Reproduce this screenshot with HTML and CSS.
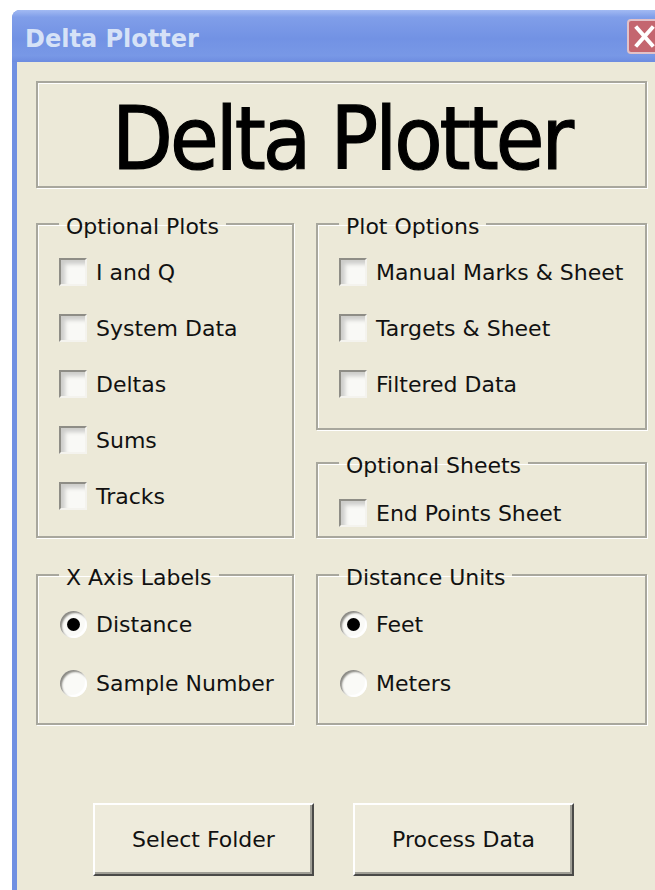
FILE: index.html
```html
<!DOCTYPE html>
<html lang="en">
<head>
<meta charset="utf-8">
<title>Delta Plotter</title>
<link rel="stylesheet" href="styles.css">
</head>
<body>
<div class="window">
  <div class="titlebar">
    <span class="title">Delta Plotter</span>
    <div class="close">
      <svg width="35" height="35" viewBox="0 0 35 35"><path d="M10 9 L25 26 M25 9 L10 26" stroke="#fff" stroke-width="4" stroke-linecap="square" fill="none"/></svg>
    </div>
  </div>
  <div class="client">
    <div class="banner">Delta Plotter</div>

    <div class="groups">
      <fieldset class="group plots">
        <legend><span>Optional Plots</span></legend>
        <div class="opt"><span class="check"></span>I and Q</div>
        <div class="opt"><span class="check"></span>System Data</div>
        <div class="opt"><span class="check"></span>Deltas</div>
        <div class="opt"><span class="check"></span>Sums</div>
        <div class="opt"><span class="check"></span>Tracks</div>
      </fieldset>

      <div class="stack">
        <fieldset class="group options">
          <legend><span>Plot Options</span></legend>
          <div class="opt"><span class="check"></span>Manual Marks &amp; Sheet</div>
          <div class="opt"><span class="check"></span>Targets &amp; Sheet</div>
          <div class="opt"><span class="check"></span>Filtered Data</div>
        </fieldset>
        <fieldset class="group sheets">
          <legend><span>Optional Sheets</span></legend>
          <div class="opt short"><span class="check"></span>End Points Sheet</div>
        </fieldset>
      </div>

      <fieldset class="group radios">
        <legend><span>X Axis Labels</span></legend>
        <div class="opt tall"><span class="radio on"></span>Distance</div>
        <div class="opt tall"><span class="radio"></span>Sample Number</div>
      </fieldset>

      <fieldset class="group radios">
        <legend><span>Distance Units</span></legend>
        <div class="opt tall"><span class="radio on"></span>Feet</div>
        <div class="opt tall"><span class="radio"></span>Meters</div>
      </fieldset>
    </div>

    <div class="buttons">
      <button class="btn">Select Folder</button>
      <button class="btn">Process Data</button>
    </div>
  </div>
</div>
</body>
</html>
```
FILE: styles.css
```css
html, body {
  margin: 0;
  padding: 0;
  overflow: hidden;
  background: #fff;
}

body {
  width: 655px;
  height: 890px;
  font-family: "DejaVu Sans", "Liberation Sans", sans-serif;
  color: #111;
}

/* dialog frame */
.window {
  margin: 10px 0 0 12px;
  width: 660px;
  height: 900px;
  background: #7090e2;
  border-radius: 8px 8px 0 0;
  display: flex;
  flex-direction: column;
}

.titlebar {
  height: 52px;
  flex: none;
  display: flex;
  align-items: center;
  padding: 0 10px 0 13px;
  border-radius: 8px 8px 0 0;
  background: linear-gradient(180deg, #a2baf3 0%, #809ee9 14%, #7292e4 55%, #7898e6 88%, #6d8ce0 100%);
}

.title {
  font-weight: bold;
  font-size: 24px;
  padding-top: 5px;
  color: #d6e2f7;
}

.close {
  margin-left: auto;
  width: 35px;
  height: 35px;
  box-sizing: border-box;
  border: 2px solid #e2c2c8;
  border-radius: 4px;
  background: #c4666f;
  display: flex;
}

.close svg {
  margin: -2px;
}

.client {
  flex: 1;
  margin-left: 5px;
  background: #ece9d8;
  padding: 19px 0 0 19px;
}

/* etched frame around the heading */
.banner {
  width: 611px;
  height: 107px;
  box-sizing: border-box;
  border: 2px solid #a8a79d;
  box-shadow: inset 1px 1px 0 #fff, 1px 1px 0 #fff;
  display: flex;
  align-items: center;
  justify-content: center;
  padding-top: 8px;
  font-family: "DejaVu Sans Condensed", "DejaVu Sans", sans-serif;
  font-size: 88px;
  letter-spacing: -3px;
  color: #000;
  -webkit-text-stroke: 1.2px #000;
}

.groups {
  margin-top: 24px;
  display: grid;
  grid-template-columns: 258px 331px;
  column-gap: 22px;
  row-gap: 25px;
}

.stack {
  display: flex;
  flex-direction: column;
  gap: 21px;
}

.group {
  margin: 0;
  min-width: 0;
  border: 2px solid #a8a79d;
  box-shadow: inset 1px 1px 0 #fff, 1px 1px 0 #fff;
  padding: 8px 0 12px 21px;
  font-size: 22px;
}

.group legend {
  padding: 0 7px;
  line-height: 24px;
  font-size: 22px;
}

/* caption text sits a little below the frame line */
.group legend span {
  position: relative;
  top: 3px;
}

.options { padding-bottom: 16px; }
.sheets { flex: 1; padding-top: 15px; padding-bottom: 0; }
.radios { padding-bottom: 10px; }

.opt {
  display: flex;
  align-items: center;
  gap: 9px;
  height: 56px;
  white-space: nowrap;
}

.opt.short { height: 46px; }
.opt.tall { height: 59px; }

.check {
  flex: none;
  width: 28px;
  height: 28px;
  box-sizing: border-box;
  border: 2px solid;
  border-color: #8e8d86 #f4f3ee #f4f3ee #8e8d86;
  background: #f9f9f6;
  box-shadow: inset 4px 4px 4px rgba(0, 0, 0, 0.18);
}

.radio {
  flex: none;
  width: 27px;
  height: 27px;
  margin-left: 1px;
  border-radius: 50%;
  background: #fafaf7;
  box-shadow: inset 2px 2px 2px #8b8a84, inset -2px -2px 1px #fff;
  display: flex;
  align-items: center;
  justify-content: center;
}

.radio.on::after {
  content: "";
  width: 13px;
  height: 13px;
  border-radius: 50%;
  background: #000;
}

.buttons {
  margin-top: 78px;
  padding-left: 57px;
  display: flex;
  gap: 39px;
}

.btn {
  width: 221px;
  height: 73px;
  box-sizing: border-box;
  font-family: "DejaVu Sans", "Liberation Sans", sans-serif;
  font-size: 22px;
  color: #111;
  background: #eeebdc;
  border: 2px solid;
  border-color: #fff #4a4a48 #4a4a48 #fff;
  box-shadow: inset -2px -2px 0 #a09f96;
  padding: 0;
}
```
